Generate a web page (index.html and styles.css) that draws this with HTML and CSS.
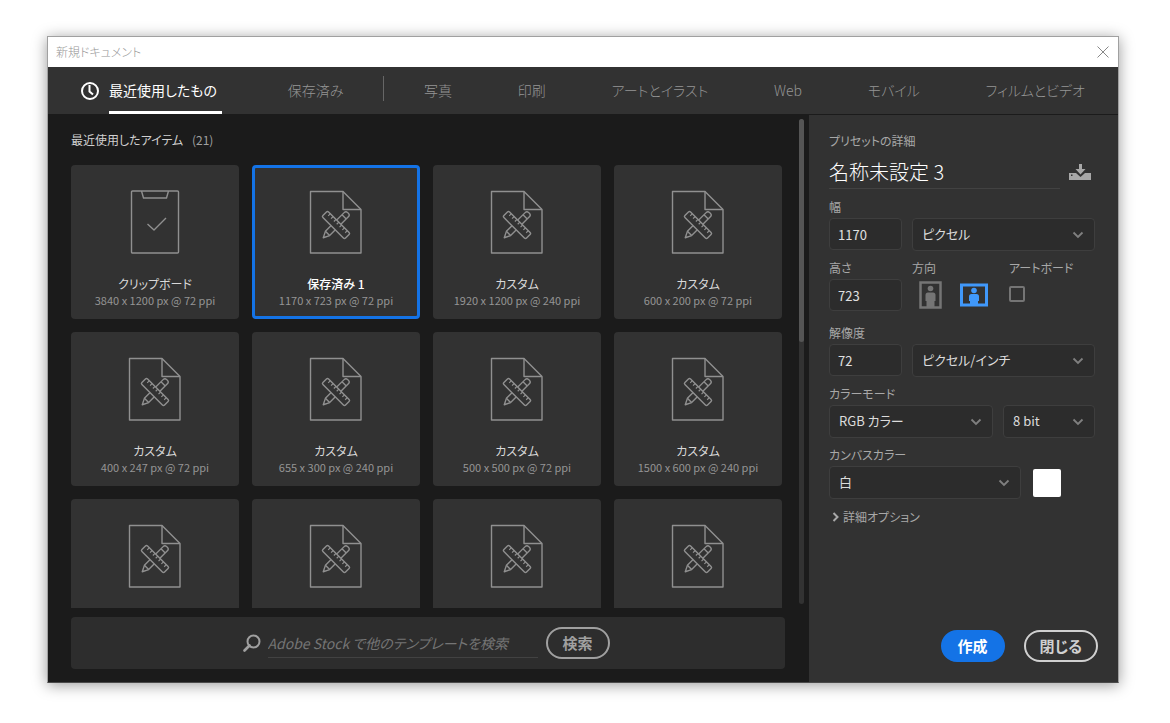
FILE: index.html
```html
<!DOCTYPE html>
<html lang="ja">
<head>
<meta charset="utf-8">
<meta name="viewport" content="width=device-width, initial-scale=1">
<title>新規ドキュメント</title>
<link rel="stylesheet" href="styles.css">
</head>
<body>
<svg class="sprites" width="0" height="0" aria-hidden="true">
  <symbol id="icon-document" viewBox="0 0 54 66">
    <g fill="none" stroke="currentColor" stroke-width="1.4" stroke-linejoin="round">
      <path d="M1.500 2.500H34L52 20.500V64H1.500Z"/>
      <path d="M34 2.500V20.500H52"/>
      <g transform="translate(27 36) rotate(-45)">
        <path d="M-18 0L-12 -3H14.500Q17 -3 17 -.5V.5Q17 3 14.500 3H-12Z"/>
        <path d="M-12 -3V3M11.500 -3V3"/>
      </g>
      <g transform="translate(27 36) rotate(45)">
        <rect class="ruler" x="-16" y="-4" width="32" height="8" rx="1.500"/>
        <path stroke-width="1.200" d="M-12 -4V-1M-8 -4V-1M-4 -4V-1M0 -4V-1M4 -4V-1M8 -4V-1M12 -4V-1"/>
      </g>
    </g>
  </symbol>
  <symbol id="icon-clipboard" viewBox="0 0 54 66">
    <g fill="none" stroke="currentColor" stroke-width="1.400" stroke-linejoin="round">
      <rect x="3.500" y="2" width="47" height="62" rx="1"/>
      <path d="M13.500 2L15.500 9H38.500L40.500 2M19.500 35L26 41L38 29"/>
    </g>
  </symbol>
  <symbol id="icon-chevron" viewBox="0 0 12 8">
    <path d="M1.500 1.500L6 6L10.500 1.500" fill="none" stroke="currentColor" stroke-width="1.800"/>
  </symbol>
</svg>

<main class="window">
  <header class="titlebar">
    <h1 class="titlebar-text">新規ドキュメント</h1>
    <button class="titlebar-close" type="button" aria-label="ウィンドウを閉じる">
      <svg width="12" height="12" viewBox="0 0 12 12"><path d="M.5 .5L11.500 11.500M11.500 .5L.5 11.500" stroke="currentColor" stroke-width="1"/></svg>
    </button>
  </header>

  <nav class="tabs">
    <button class="tab tab-active" type="button">
      <svg class="tab-icon" width="20" height="20" viewBox="0 0 20 20" fill="none" stroke="currentColor"><circle cx="10" cy="10" r="8" stroke-width="2"/><path d="M9.500 4V10.500L13 13.500" stroke-width="2"/></svg>
      <span class="tab-label">最近使用したもの</span>
    </button>
    <button class="tab" type="button">保存済み</button>
    <span class="tab-divider"></span>
    <button class="tab" type="button">写真</button>
    <button class="tab" type="button">印刷</button>
    <button class="tab" type="button">アートとイラスト</button>
    <button class="tab" type="button">Web</button>
    <button class="tab" type="button">モバイル</button>
    <button class="tab" type="button">フィルムとビデオ</button>
  </nav>

  <div class="content">
    <section class="browser">
      <div class="recent">
        <div class="recent-main">
          <h2 class="recent-title">最近使用したアイテム <span class="recent-count">(21)</span></h2>
          <div class="cards">
            <button class="card" type="button"><svg class="card-icon"><use href="#icon-clipboard"/></svg><span class="card-name">クリップボード</span><span class="card-size">3840 x 1200 px @ 72 ppi</span></button>
            <button class="card card-selected" type="button"><svg class="card-icon"><use href="#icon-document"/></svg><span class="card-name">保存済み 1</span><span class="card-size">1170 x 723 px @ 72 ppi</span></button>
            <button class="card" type="button"><svg class="card-icon"><use href="#icon-document"/></svg><span class="card-name">カスタム</span><span class="card-size">1920 x 1200 px @ 240 ppi</span></button>
            <button class="card" type="button"><svg class="card-icon"><use href="#icon-document"/></svg><span class="card-name">カスタム</span><span class="card-size">600 x 200 px @ 72 ppi</span></button>
            <button class="card" type="button"><svg class="card-icon"><use href="#icon-document"/></svg><span class="card-name">カスタム</span><span class="card-size">400 x 247 px @ 72 ppi</span></button>
            <button class="card" type="button"><svg class="card-icon"><use href="#icon-document"/></svg><span class="card-name">カスタム</span><span class="card-size">655 x 300 px @ 240 ppi</span></button>
            <button class="card" type="button"><svg class="card-icon"><use href="#icon-document"/></svg><span class="card-name">カスタム</span><span class="card-size">500 x 500 px @ 72 ppi</span></button>
            <button class="card" type="button"><svg class="card-icon"><use href="#icon-document"/></svg><span class="card-name">カスタム</span><span class="card-size">1500 x 600 px @ 240 ppi</span></button>
            <button class="card" type="button"><svg class="card-icon"><use href="#icon-document"/></svg></button>
            <button class="card" type="button"><svg class="card-icon"><use href="#icon-document"/></svg></button>
            <button class="card" type="button"><svg class="card-icon"><use href="#icon-document"/></svg></button>
            <button class="card" type="button"><svg class="card-icon"><use href="#icon-document"/></svg></button>
          </div>
        </div>
        <div class="scrollbar"><div class="scrollbar-thumb"></div></div>
      </div>
      <form class="search">
        <label class="search-label" for="stock" aria-label="検索">
          <svg width="18" height="18" viewBox="0 0 18 18" fill="none" stroke="currentColor"><circle cx="10.500" cy="7.500" r="6" stroke-width="2"/><path d="M6.500 11.500L1.500 16.500" stroke-width="2.600" stroke-linecap="round"/></svg>
        </label>
        <input class="search-input" id="stock" type="text" placeholder="Adobe Stock で他のテンプレートを検索">
        <button class="pill pill-search" type="button">検索</button>
      </form>
    </section>

    <form class="details">
      <p class="details-heading">プリセットの詳細</p>
      <div class="name-row">
        <input class="name-input" type="text" value="名称未設定 3" aria-label="名称">
        <button class="save" type="button" aria-label="プリセットを保存">
          <svg width="22" height="17" viewBox="0 0 22 17" fill="currentColor"><path d="M10 0H13V5H16.500L11.500 10.500L6.500 5H10Z"/><path d="M0 9H7L11.500 13L16 9H22V16H0V9ZM2 10.500V12H3.500V10.500Z" fill-rule="evenodd"/></svg>
        </button>
      </div>

      <label class="label" for="width">幅</label>
      <div class="row">
        <input class="number" id="width" type="text" value="1170">
        <div class="select grow">
          <select aria-label="単位"><option>ピクセル</option></select>
          <svg class="chevron"><use href="#icon-chevron"/></svg>
        </div>
      </div>

      <div class="row size-row">
        <div class="group group-height">
          <label class="label" for="height">高さ</label>
          <input class="number" id="height" type="text" value="723">
        </div>
        <fieldset class="group group-orientation">
          <legend class="label">方向</legend>
          <div class="orientations">
            <label class="orientation">
              <input class="hidden-input" type="radio" name="orientation" aria-label="縦">
              <svg width="24" height="28" viewBox="0 0 24 28"><rect x="1.500" y="1.500" width="20" height="25" fill="none" stroke="currentColor" stroke-width="2.500"/><circle cx="11.500" cy="7.500" r="2.800" fill="currentColor"/><path fill="currentColor" d="M9 11.500H14Q16.500 11.500 16.500 14V20H15.500V27H7.500V20H6.500V14Q6.500 11.500 9 11.500Z"/></svg>
            </label>
            <label class="orientation">
              <input class="hidden-input" type="radio" name="orientation" aria-label="横" checked>
              <svg width="28" height="28" viewBox="0 0 28 28"><rect x="1.500" y="4" width="25" height="20" fill="none" stroke="currentColor" stroke-width="3"/><circle cx="14" cy="9.500" r="2.800" fill="currentColor"/><path fill="currentColor" d="M11.500 13H16.500Q19 13 19 15.500V20H18V24H10V20H9V15.500Q9 13 11.500 13Z"/></svg>
            </label>
          </div>
        </fieldset>
        <div class="group">
          <label class="label" for="artboard">アートボード</label>
          <input class="checkbox" id="artboard" type="checkbox">
        </div>
      </div>

      <label class="label" for="resolution">解像度</label>
      <div class="row">
        <input class="number" id="resolution" type="text" value="72">
        <div class="select grow">
          <select aria-label="解像度の単位"><option>ピクセル/インチ</option></select>
          <svg class="chevron"><use href="#icon-chevron"/></svg>
        </div>
      </div>

      <label class="label" for="mode">カラーモード</label>
      <div class="row">
        <div class="select grow">
          <select id="mode"><option>RGB カラー</option></select>
          <svg class="chevron"><use href="#icon-chevron"/></svg>
        </div>
        <div class="select select-depth">
          <select aria-label="ビット数"><option>8 bit</option></select>
          <svg class="chevron"><use href="#icon-chevron"/></svg>
        </div>
      </div>

      <label class="label" for="canvas">カンバスカラー</label>
      <div class="row row-canvas">
        <div class="select grow">
          <select id="canvas"><option>白</option></select>
          <svg class="chevron"><use href="#icon-chevron"/></svg>
        </div>
        <button class="swatch" type="button" aria-label="カンバスの色"></button>
      </div>

      <button class="advanced" type="button">
        <svg width="7" height="10" viewBox="0 0 7 10"><path d="M1.500 1L5.500 5L1.500 9" fill="none" stroke="currentColor" stroke-width="2"/></svg>
        詳細オプション
      </button>

      <div class="actions">
        <button class="pill pill-primary" type="button">作成</button>
        <button class="pill pill-close" type="button">閉じる</button>
      </div>
    </form>
  </div>
</main>
</body>
</html>
```
FILE: styles.css
```css
* {
  box-sizing: border-box;
}

body {
  display: flex;
  height: 100vh;
  margin: 0;
  padding: 36px 51px 40px 47px;
  background: #fff;
  color: #a8a8a8;
  font: 12px/18px "Noto Sans CJK JP", sans-serif;
  font-feature-settings: "palt";
}

button,
input,
select {
  margin: 0;
  padding: 0;
  border: 0;
  background: none;
  color: inherit;
  font: inherit;
  font-feature-settings: inherit;
}

svg {
  display: block;
  flex: none;
}

.sprites {
  position: absolute;
}

.window {
  display: flex;
  flex: 1;
  flex-direction: column;
  min-width: 0;
  border: 1px solid #a0a0a0;
  border-bottom-color: #4a4a4a;
  background: #1b1b1b;
  box-shadow: 0 2px 14px rgba(0, 0, 0, 0.4);
}

.titlebar {
  display: flex;
  align-items: center;
  justify-content: space-between;
  height: 30px;
  padding: 0 9px 0 8px;
  background: #fff;
  color: #959595;
}

.titlebar-text {
  margin: 0;
  font-size: 12px;
  font-weight: 300;
}

.titlebar-close {
  color: #888;
}

/* Category tabs */
.tabs {
  display: flex;
  align-items: stretch;
  justify-content: space-between;
  height: 47px;
  padding: 0 33px 0 32px;
  background: #323232;
}

.tab {
  display: flex;
  align-items: center;
  gap: 9px;
  padding-bottom: 2px;
  color: #959595;
  font-size: 14px;
  font-weight: 300;
  white-space: nowrap;
}

.tab-active {
  padding-bottom: 0;
  color: #fff;
  font-weight: 400;
}

.tab-label {
  display: flex;
  align-items: center;
  align-self: stretch;
  padding: 1px 5px 0 0;
  border-bottom: 3px solid #fff;
}

.tab-divider {
  width: 1px;
  margin: 9px -26px 13px;
  background: #666;
}

.content {
  display: flex;
  flex: 1;
  min-height: 0;
}

/* Preset browser */
.browser {
  display: flex;
  flex: 1;
  flex-direction: column;
  min-width: 0;
}

.recent {
  display: flex;
  flex: 1;
  min-height: 0;
  padding: 0 5px 0 23px;
}

.recent-main {
  flex: 1;
  min-width: 0;
  overflow: hidden;
}

.recent-title {
  margin: 17px 0 16px;
  color: #d0d0d0;
  font-size: 12px;
  font-weight: 400;
}

.recent-count {
  margin-left: 6px;
  color: #a0a0a0;
}

.cards {
  display: grid;
  grid-template-columns: repeat(4, 1fr);
  grid-auto-rows: 154px;
  gap: 13px;
}

.card {
  display: flex;
  flex-direction: column;
  align-items: center;
  padding-top: 24px;
  border-radius: 4px;
  background: #323232;
}

.card-selected {
  padding-top: 21px;
  border: 3px solid #1473e6;
}

.card-icon {
  width: 54px;
  height: 66px;
  margin-bottom: 21px;
  color: #909090;
}

.ruler {
  fill: #323232;
}

.card-name {
  color: #d8d8d8;
  line-height: 16px;
}

.card-size {
  color: #959595;
  font-size: 11px;
  line-height: 16px;
}

.card-selected .card-name {
  color: #fff;
  font-weight: 500;
}

.scrollbar {
  width: 5px;
  margin: 5px 0 4px 17px;
  border-radius: 3px;
  background: #323232;
}

.scrollbar-thumb {
  height: 46%;
  border-radius: 3px;
  background: #555;
}

.search {
  display: flex;
  align-items: center;
  justify-content: center;
  height: 52px;
  margin: 9px 24px 13px 23px;
  padding-right: 4px;
  border-radius: 4px;
  background: #2d2d2d;
}

.search-label {
  margin-right: 7px;
  color: #a0a0a0;
}

.search-input {
  width: 270px;
  height: 30px;
  margin-right: 8px;
  border-bottom: 1px solid #424242;
  color: #d0d0d0;
  font-size: 14px;
  font-style: italic;
}

.search-input::placeholder {
  color: #757575;
  opacity: 1;
}

.pill {
  min-width: 64px;
  height: 32px;
  padding: 0 14px;
  border: 2px solid;
  border-radius: 16px;
  font-size: 15px;
  font-weight: 700;
}

.pill-search {
  color: #a0a0a0;
}

.pill-primary {
  border-color: #1473e6;
  background: #1473e6;
  color: #fff;
}

.pill-close {
  color: #d0d0d0;
}

/* Preset details */
.details {
  display: flex;
  flex: none;
  flex-direction: column;
  width: 309px;
  padding: 17px 23px 20px 20px;
  border-top: 1px solid #1b1b1b;
  background: #323232;
}

.details-heading {
  margin: 0;
}

.name-row {
  display: flex;
  align-items: center;
  justify-content: space-between;
  margin-bottom: 10px;
  padding-right: 4px;
}

.name-input {
  width: 231px;
  height: 39px;
  padding-top: 5px;
  border-bottom: 1px solid #424242;
  color: #fff;
  font-size: 20px;
  font-weight: 300;
}

.save {
  padding-top: 6px;
}

.label {
  display: block;
  height: 19px;
  padding: 0;
  line-height: 16px;
}

.row {
  display: flex;
  gap: 10px;
  margin-bottom: 9px;
}

.size-row {
  gap: 0;
  margin-bottom: 14px;
}

.number {
  width: 73px;
  height: 32px;
  padding-left: 8px;
  border: 1px solid #3e3e3e;
  border-radius: 4px;
  background: #2c2c2c;
  color: #e0e0e0;
  font-size: 13px;
}

.select {
  position: relative;
}

.grow {
  flex: 1;
}

.select select {
  width: 100%;
  height: 33px;
  padding: 0 26px 2px 9px;
  border: 1px solid #3e3e3e;
  border-radius: 4px;
  appearance: none;
  background: #2c2c2c;
  color: #dcdcdc;
  font-size: 13px;
}

.chevron {
  position: absolute;
  top: 13px;
  right: 11px;
  width: 12px;
  height: 8px;
  color: #808080;
  pointer-events: none;
}

.select-depth {
  width: 92px;
}

.group {
  min-width: 0;
  margin: 0;
  padding: 0;
  border: 0;
}

.group-height {
  width: 83px;
}

.group-orientation {
  width: 97px;
}

.orientations {
  display: flex;
  gap: 17px;
  padding: 2px 0 0 7px;
}

.orientation {
  color: #757575;
}

.orientation:has(:checked) {
  color: #4098fa;
}

.hidden-input {
  position: absolute;
  opacity: 0;
}

.checkbox {
  display: block;
  width: 16px;
  height: 16px;
  margin-top: 7px;
  border: 2px solid #757575;
  border-radius: 2px;
  appearance: none;
}

.row-canvas {
  align-items: center;
  gap: 12px;
  padding-right: 34px;
}

.swatch {
  width: 28px;
  height: 28px;
  border-radius: 2px;
  background: #fff;
}

.advanced {
  display: flex;
  align-items: center;
  align-self: flex-start;
  gap: 4px;
  padding-left: 3px;
}

.actions {
  display: flex;
  justify-content: flex-end;
  gap: 19px;
  margin: auto -3px 0 0;
}
```
